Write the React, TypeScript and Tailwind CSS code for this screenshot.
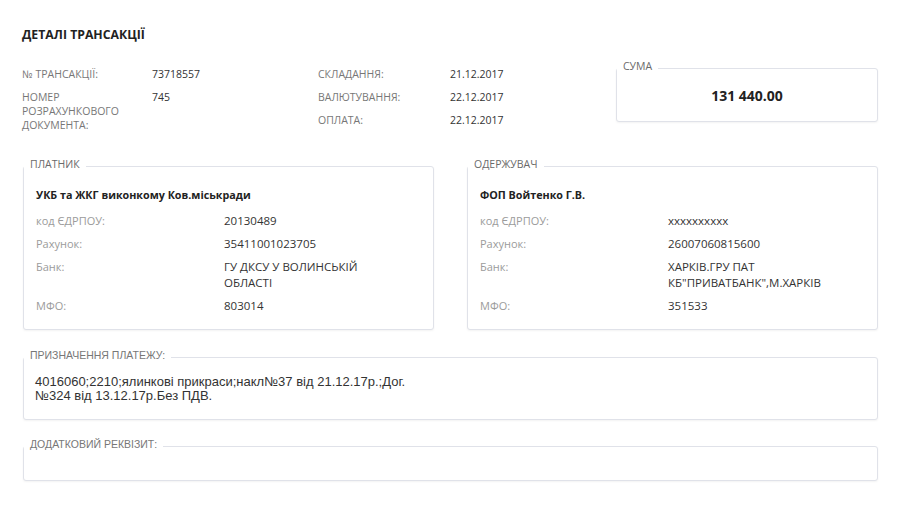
import React from 'react'

const openSans = { fontFamily: '"Open Sans", "Noto Sans", sans-serif' }

function Box({
  label,
  className,
  arial,
  children,
}: {
  label: string
  className?: string
  arial?: boolean
  children?: React.ReactNode
}) {
  return (
    <div
      className={
        'relative rounded-[3px] border border-[#e0e2e9] bg-white shadow-[0_1px_2px_rgba(0,0,0,0.05)] ' +
        (className || '')
      }
    >
      <span
        className={
          'absolute left-0 -top-[9px] bg-white px-[6px] leading-[12px] uppercase ' +
          (arial
            ? "font-['Liberation_Sans',Arial,sans-serif] text-[10.5px] text-[#777]"
            : 'text-[10.5px] text-[#6a6a6a]')
        }
      >
        {label}
      </span>
      {children}
    </div>
  )
}

function InfoRow({ label, children }: { label: string; children: React.ReactNode }) {
  return (
    <>
      <div className="text-[11px] text-[#9b9b9b]">{label}</div>
      <div className="text-[11.5px] text-[#333]">{children}</div>
    </>
  )
}

function Party({
  label,
  name,
  code,
  account,
  bank,
  mfo,
}: {
  label: string
  name: string
  code: string
  account: string
  bank: React.ReactNode
  mfo: string
}) {
  return (
    <Box label={label} className="w-[411px] h-[164px] px-[12px] pt-[20px]">
      <div className="text-[10.75px] leading-[16px] font-bold text-[#222] mb-[10px]">{name}</div>
      <div className="grid grid-cols-[188px_1fr] gap-y-[7px] leading-[16px]">
        <InfoRow label="код ЄДРПОУ:">{code}</InfoRow>
        <InfoRow label="Рахунок:">{account}</InfoRow>
        <InfoRow label="Банк:">{bank}</InfoRow>
        <InfoRow label="МФО:">{mfo}</InfoRow>
      </div>
    </Box>
  )
}

export default function App() {
  return (
    <div className="min-h-screen bg-white px-[22px] pt-[27px] pb-8" style={openSans}>
      <h1 className="text-[12.25px] leading-[16px] font-bold text-[#222]">ДЕТАЛІ ТРАНСАКЦІЇ</h1>

      {/* Transaction header */}
      <div className="mt-[24px] flex items-start">
        <div className="w-[296px] grid grid-cols-[130px_1fr] gap-y-[9px] text-[10.5px] leading-[14px]">
          <div className="text-[#777]">№ ТРАНСАКЦІЇ:</div>
          <div className="text-[#333]">73718557</div>
          <div className="text-[#777]">
            НОМЕР
            <br />
            РОЗРАХУНКОВОГО
            <br />
            ДОКУМЕНТА:
          </div>
          <div className="text-[#333]">745</div>
        </div>
        <div className="w-[298px] grid grid-cols-[132px_1fr] gap-y-[9px] text-[10.5px] leading-[14px]">
          <div className="text-[#777]">СКЛАДАННЯ:</div>
          <div className="text-[#333]">21.12.2017</div>
          <div className="text-[#777]">ВАЛЮТУВАННЯ:</div>
          <div className="text-[#333]">22.12.2017</div>
          <div className="text-[#777]">ОПЛАТА:</div>
          <div className="text-[#333]">22.12.2017</div>
        </div>
        <Box label="СУМА" className="mt-[1px] w-[262px] h-[54px] flex items-center justify-center">
          <span className="text-[14px] font-bold text-[#222]">131 440.00</span>
        </Box>
      </div>

      {/* Payer / receiver */}
      <div className="mt-[34px] ml-[1px] flex gap-[33px]">
        <Party
          label="Платник"
          name="УКБ та ЖКГ виконкому Ков.міськради"
          code="20130489"
          account="35411001023705"
          bank={
            <>
              ГУ ДКСУ У ВОЛИНСЬКІЙ
              <br />
              ОБЛАСТІ
            </>
          }
          mfo="803014"
        />
        <Party
          label="Одержувач"
          name="ФОП Войтенко Г.В."
          code="xxxxxxxxxx"
          account="26007060815600"
          bank={
            <>
              ХАРКІВ.ГРУ ПАТ
              <br />
              КБ"ПРИВАТБАНК",М.ХАРКІВ
            </>
          }
          mfo="351533"
        />
      </div>

      {/* Purpose */}
      <Box label="Призначення платежу:" arial className="mt-[27px] ml-[1px] h-[63px] px-[11px] pt-[17px]">
        <p className="font-['Liberation_Sans',Arial,sans-serif] text-[13px] leading-[14px] text-[#333]">
          4016060;2210;ялинкові прикраси;накл№37 від 21.12.17р.;Дог.
          <br />
          №324 від 13.12.17р.Без ПДВ.
        </p>
      </Box>

      <Box label="Додатковий реквізит:" arial className="mt-[26px] ml-[1px] h-[35px]" />
    </div>
  )
}
